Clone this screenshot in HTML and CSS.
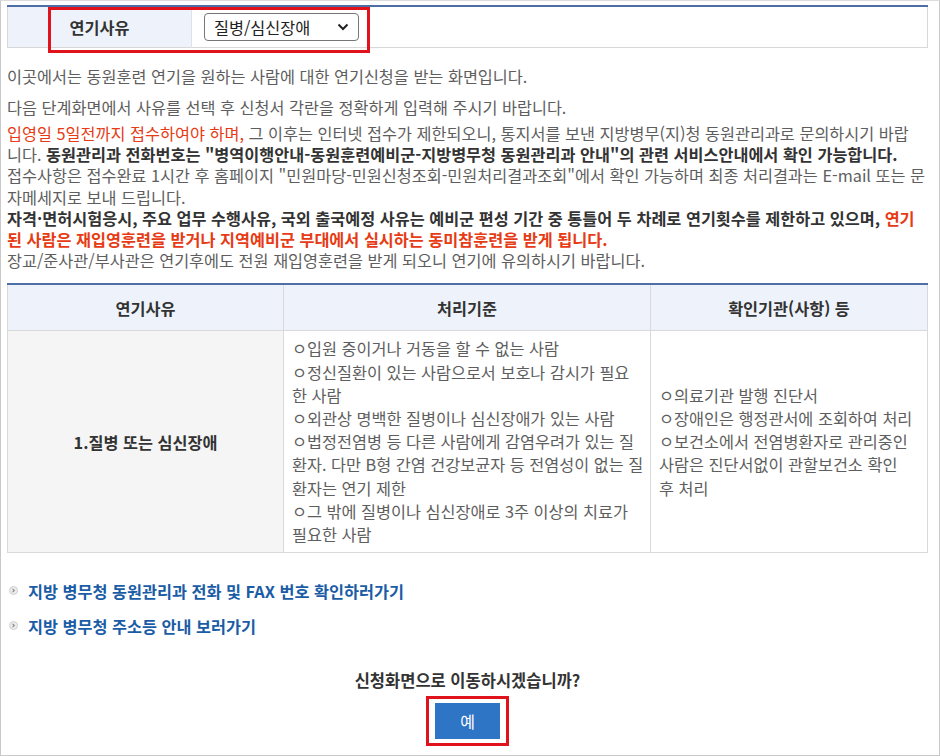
FILE: index.html
```html
<!DOCTYPE html>
<html lang="ko">
<head>
<meta charset="utf-8">
<link rel="stylesheet" href="styles.css">
</head>
<body>
<div class="frame">
  <table class="top-table">
    <tr>
      <th class="top-label">연기사유</th>
      <td class="top-value">
        <div class="select"><span>질병/심신장애</span>
          <svg class="chev" width="12" height="8" viewBox="0 0 12 8"><path d="M1.5 1.5 L6 6 L10.5 1.5" fill="none" stroke="#222" stroke-width="2"/></svg>
        </div>
      </td>
    </tr>
  </table>
  <div class="mark-top"></div>

  <p class="intro">이곳에서는 동원훈련 연기을 원하는 사람에 대한 연기신청을 받는 화면입니다.</p>

  <p class="step">다음 단계화면에서 사유를 선택 후 신청서 각란을 정확하게 입력해 주시기 바랍니다.</p>
  <p class="notes"><span class="red">입영일 5일전까지 접수하여야 하며,</span> 그 이후는 인터넷 접수가 제한되오니, 통지서를 보낸 지방병무(지)청 동원관리과로 문의하시기 바랍<br>니다. <b>동원관리과 전화번호는 "병역이행안내-동원훈련예비군-지방병무청 동원관리과 안내"의 관련 서비스안내에서 확인 가능합니다.</b><br>접수사항은 접수완료 1시간 후 홈페이지 "민원마당-민원신청조회-민원처리결과조회"에서 확인 가능하며 최종 처리결과는 E-mail 또는 문<br>자메세지로 보내 드립니다.<br><b>자격·면허시험응시, 주요 업무 수행사유, 국외 출국예정 사유는 예비군 편성 기간 중 통틀어 두 차례로 연기횟수를 제한하고 있으며, <span class="red">연기<br>된 사람은 재입영훈련을 받거나 지역예비군 부대에서 실시하는 동미참훈련을 받게 됩니다.</span></b><br>장교/준사관/부사관은 연기후에도 전원 재입영훈련을 받게 되오니 연기에 유의하시기 바랍니다.</p>

  <table class="main-table">
    <colgroup>
      <col class="w1">
      <col class="w2">
      <col class="w3">
    </colgroup>
    <tr>
      <th>연기사유</th>
      <th>처리기준</th>
      <th>확인기관(사항) 등</th>
    </tr>
    <tr>
      <td class="reason">1.질병 또는 심신장애</td>
      <td class="crit">ㅇ입원 중이거나 거동을 할 수 없는 사람<br>ㅇ정신질환이 있는 사람으로서 보호나 감시가 필요<br>한 사람<br>ㅇ외관상 명백한 질병이나 심신장애가 있는 사람<br>ㅇ법정전염병 등 다른 사람에게 감염우려가 있는 질<br>환자. 다만 B형 간염 건강보균자 등 전염성이 없는 질<br>환자는 연기 제한<br>ㅇ그 밖에 질병이나 심신장애로 3주 이상의 치료가<br>필요한 사람</td>
      <td class="crit">ㅇ의료기관 발행 진단서<br>ㅇ장애인은 행정관서에 조회하여 처리<br>ㅇ보건소에서 전염병환자로 관리중인<br>사람은 진단서없이 관할보건소 확인<br>후 처리</td>
    </tr>
  </table>

  <ul class="links">
    <li><span class="bullet"><svg width="9" height="9" viewBox="0 0 9 9"><circle cx="4.5" cy="4.5" r="4" fill="#ececec" stroke="#d0d0d0" stroke-width="1"/><path d="M3.6 2.8 L5.3 4.5 L3.6 6.2" fill="none" stroke="#8a8a8a" stroke-width="1.1"/></svg></span><a>지방 병무청 동원관리과 전화 및 FAX 번호 확인하러가기</a></li>
    <li><span class="bullet"><svg width="9" height="9" viewBox="0 0 9 9"><circle cx="4.5" cy="4.5" r="4" fill="#ececec" stroke="#d0d0d0" stroke-width="1"/><path d="M3.6 2.8 L5.3 4.5 L3.6 6.2" fill="none" stroke="#8a8a8a" stroke-width="1.1"/></svg></span><a>지방 병무청 주소등 안내 보러가기</a></li>
  </ul>

  <div class="confirm">
    <p class="question">신청화면으로 이동하시겠습니까?</p>
    <div class="mark-btn"><button class="yes">예</button></div>
  </div>
</div>
</body>
</html>
```

FILE: styles.css
```css
html, body {
  margin: 0;
  padding: 0;
  background: #fff;
}
body {
  font-family: "Noto Sans CJK KR", "Noto Sans", sans-serif;
  color: #5e5e5e;
  font-size: 16.3px;
}
.frame {
  position: relative;
  box-sizing: border-box;
  width: 940px;
  height: 756px;
  border: 1px solid #c9c9c9;
  border-top-color: #dcdcdc;
  padding: 4px 11px 0 6px;
  overflow: hidden;
}
table {
  border-collapse: collapse;
  width: 921px;
  table-layout: fixed;
}
.top-table {
  border-top: 2px solid #4d6fa6;
  border-left: 1px solid #d8d8d8;
  border-right: 1px solid #d8d8d8;
  border-bottom: 1px solid #d8d8d8;
}
.top-table th, .top-table td {
  height: 40px;
  padding: 0;
}
.top-label {
  width: 183px;
  background: #eef3fb;
  color: #333;
  font-weight: bold;
  text-align: center;
  border-right: 1px solid #dde3ec;
}
.top-value {
  padding-left: 12px !important;
}
.select {
  box-sizing: border-box;
  width: 155px;
  height: 28px;
  border: 1px solid #777;
  border-radius: 4px;
  display: flex;
  align-items: center;
  justify-content: space-between;
  padding: 0 9px 0 9px;
  color: #222;
}
.chev { display: block; }
.mark-top {
  position: absolute;
  left: 47px;
  top: 6px;
  width: 322px;
  height: 46px;
  box-sizing: border-box;
  border: 3px solid #e0121b;
}
p { margin: 0; }
.intro {
  margin-top: 17px;
  line-height: 22px;
}
.step {
  margin-top: 9px;
  line-height: 22px;
}
.notes {
  margin-top: 5px;
  line-height: 21.2px;
  margin-bottom: 12px;
}
.notes b { color: #333; }
.red { color: #e63b14; }
.main-table {
  border-top: 2px solid #4d6fa6;
}
.w1 { width: 276px; }
.w2 { width: 367px; }
.main-table th, .main-table td {
  border: 1px solid #d9d9d9;
}
.main-table tr:first-child th { border-top: none; }
.main-table th {
  background: #eef3fb;
  color: #333;
  font-weight: bold;
  height: 45px;
  padding: 0;
}
.reason {
  background: #f5f5f5;
  color: #333;
  font-weight: bold;
  text-align: center;
}
.crit {
  vertical-align: middle;
  line-height: 23.2px;
  padding: 6px 4px 6px 8px;
  color: #5e5e5e;
  white-space: nowrap;
  overflow: hidden;
}
.links {
  list-style: none;
  margin: 20px 0 0 0;
  padding: 0;
}
.links li {
  display: flex;
  align-items: center;
  height: 35px;
  font-weight: bold;
  font-size: 16.3px;
}
.links a { color: #1a5ca6; }
.bullet {
  display: flex;
  width: 9px;
  margin: 0 10px 0 2px;
}
.confirm {
  display: flex;
  flex-direction: column;
  align-items: center;
  margin-top: 26px;
}
.question {
  color: #333;
  font-weight: bold;
  font-size: 16.5px;
  line-height: 22px;
}
.mark-btn {
  margin-top: 5px;
  border: 3px solid #e0121b;
  padding: 4px 6px;
}
.yes {
  display: block;
  width: 65px;
  height: 36px;
  border: none;
  background: #2f75c6;
  color: #fff;
  font-family: "Noto Sans CJK KR", sans-serif;
  font-size: 16px;
  padding: 0;
}
```
